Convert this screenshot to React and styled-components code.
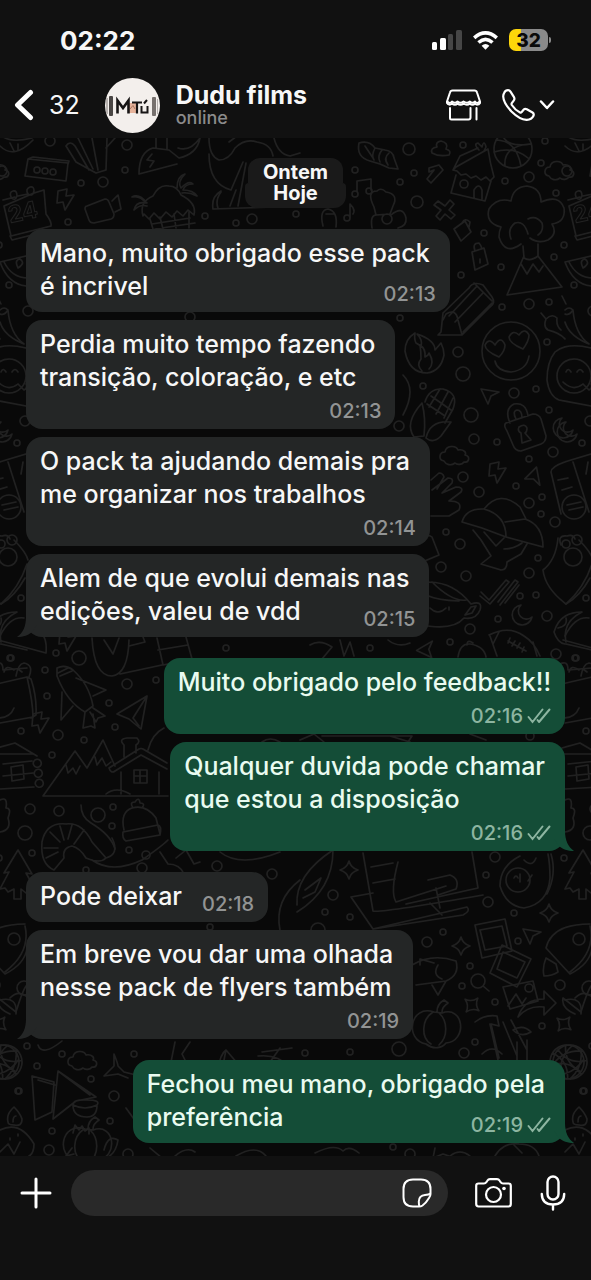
import React from 'react';
import styled, { createGlobalStyle } from 'styled-components';

const GlobalStyle = createGlobalStyle`
  * {
    box-sizing: border-box;
  }
  body {
    margin: 0;
    background: #111111;
    color: #f7f7f7;
    font-family: Inter, 'Liberation Sans', sans-serif;
  }
  button {
    display: flex;
    align-items: center;
    padding: 0;
    border: 0;
    background: none;
    color: inherit;
    font: inherit;
    cursor: pointer;
  }
  svg {
    display: block;
  }
`;

const Page = styled.div`
  display: flex;
  flex-direction: column;
  min-height: 100vh;
`;

const StatusBar = styled.div`
  display: flex;
  align-items: center;
  justify-content: space-between;
  height: 72px;
  padding: 8px 40px 0 60px;
`;

const Clock = styled.span`
  font-size: 26px;
  font-weight: 700;
`;

const StatusIcons = styled.div`
  display: flex;
  align-items: center;
  gap: 11px;
`;

const Battery = styled.div`
  position: relative;
  display: flex;
  align-items: center;
  justify-content: center;
  width: 39px;
  height: 22px;
  margin-right: 3px;
  border-radius: 7px;
  background: linear-gradient(90deg, #fdd60a ${(p) => p.$level}%, #8a8a8a ${(p) => p.$level}%);
  color: #0a0a0a;
  font-size: 19px;
  font-weight: 800;

  &::after {
    content: '';
    position: absolute;
    right: -3px;
    width: 2px;
    height: 6px;
    border-radius: 0 2px 2px 0;
    background: #8a8a8a;
  }
`;

const NavBar = styled.header`
  display: flex;
  align-items: center;
  height: 66px;
  padding: 0 36px 0 14px;
`;

const BackButton = styled.button`
  gap: 15px;
  margin-right: 25px;
  font-size: 25px;
`;

const Avatar = styled.div`
  width: 55px;
  height: 55px;
  margin-right: 16px;
  border-radius: 50%;
  overflow: hidden;
`;

const Contact = styled.div`
  flex: 1;
  min-width: 0;
`;

const ContactName = styled.h1`
  margin: 0;
  font-size: 25px;
  font-weight: 700;
  line-height: 26px;
`;

const ContactStatus = styled.p`
  margin: 0;
  color: #8b8b8b;
  font-size: 18px;
  font-weight: 500;
  line-height: 20px;
`;

const NavActions = styled.div`
  display: flex;
  align-items: center;
  gap: 21px;
`;

const CallButton = styled.button`
  gap: 4px;
`;

const Chat = styled.main`
  position: relative;
  flex: 1;
  padding: 20px 26px 12px;
  background: #090909;
`;

const Wallpaper = styled.svg`
  position: absolute;
  inset: 0;
  width: 100%;
  height: 100%;
`;

const Thread = styled.div`
  position: relative;
  display: flex;
  flex-direction: column;
`;

const Dates = styled.div`
  display: flex;
  flex-direction: column;
  align-items: center;
  margin-bottom: 21px;
`;

const DatePill = styled.span`
  padding: ${(p) => (p.$last ? '0 28px 4px' : '4px 15px 0')};
  border-radius: ${(p) => (p.$last ? '4px 4px 12px 12px' : '12px 12px 0 0')};
  background: #1a1a1a;
  font-size: 20px;
  font-weight: 700;
  line-height: 21px;
`;

const Group = styled.section`
  display: flex;
  flex-direction: column;
  align-items: ${(p) => (p.$mine ? 'flex-end' : 'flex-start')};
  gap: 8px;
  margin-bottom: 21px;

  &:last-child {
    margin-bottom: 0;
  }
`;

const Bubble = styled.article`
  position: relative;
  padding: 8px 14px 9px;
  border-radius: 16px;
  background: ${(p) => (p.$mine ? '#144d37' : '#242626')};
  color: ${(p) => (p.$mine ? '#e9fbf0' : '#f7f7f7')};
`;

const Line = styled.div`
  display: flex;
  align-items: flex-end;
  justify-content: space-between;
  gap: 20px;
  padding-right: ${(p) => (p.$tight ? 0 : 6)}px;
`;

const LineText = styled.span`
  font-size: 25px;
  font-weight: 500;
  line-height: 33px;
`;

const Meta = styled.div`
  display: flex;
  align-items: flex-end;
  justify-content: flex-end;
  gap: 4px;
  height: 26px;
  color: ${(p) => (p.$mine ? '#8db5a1' : '#929494')};
  font-size: 20px;
  font-weight: 500;
  line-height: 18px;
`;

const TailShape = styled.svg`
  position: absolute;
  bottom: 0;
  ${(p) => (p.$mine ? 'right: -9px;' : 'left: -9px; transform: scaleX(-1);')}
`;

const Composer = styled.footer`
  display: flex;
  align-items: center;
  padding: 14px 25px 64px 20px;
`;

const InputPill = styled.div`
  display: flex;
  flex: 1;
  align-items: center;
  min-width: 0;
  height: 46px;
  margin: 0 27px 0 19px;
  padding: 0 16px 0 20px;
  border-radius: 23px;
  background: #292929;
`;

const MessageInput = styled.input`
  flex: 1;
  min-width: 0;
  border: 0;
  outline: 0;
  background: transparent;
  color: #f7f7f7;
  font: inherit;
  font-size: 25px;
`;

const ComposerActions = styled.div`
  display: flex;
  align-items: center;
  gap: 28px;
`;

const groups = [
  {
    mine: false,
    messages: [
      { lines: ['Mano, muito obrigado esse pack', 'é incrivel'], time: '02:13', inline: true },
      { lines: ['Perdia muito tempo fazendo', 'transição, coloração, e etc'], time: '02:13' },
      { lines: ['O pack ta ajudando demais pra', 'me organizar nos trabalhos'], time: '02:14' },
      { lines: ['Alem de que evolui demais nas', 'edições, valeu de vdd'], time: '02:15', inline: true },
    ],
  },
  {
    mine: true,
    messages: [
      { lines: ['Muito obrigado pelo feedback!!'], time: '02:16', tight: true },
      { lines: ['Qualquer duvida pode chamar', 'que estou a disposição'], time: '02:16' },
    ],
  },
  {
    mine: false,
    messages: [
      { lines: ['Pode deixar'], time: '02:18', inline: true },
      { lines: ['Em breve vou dar uma olhada', 'nesse pack de flyers também'], time: '02:19' },
    ],
  },
  {
    mine: true,
    messages: [
      { lines: ['Fechou meu mano, obrigado pela', 'preferência'], time: '02:19', inline: true },
    ],
  },
];

// [cx, cy, r]
const dots = [
  [50, 141, 5], [2, 171, 5], [127, 145, 5], [125, 170, 3], [81, 183, 3], [103, 182, 5],
  [205, 216, 3], [68, 222, 3], [9, 285, 3], [28, 311, 5], [236, 223, 3], [252, 219, 5],
  [25, 421, 5], [17, 443, 3], [296, 214, 3], [355, 170, 3], [409, 149, 6], [414, 173, 3],
  [400, 182, 3], [463, 145, 3], [505, 181, 3], [529, 177, 5], [541, 163, 3], [556, 193, 3],
  [545, 141, 3], [417, 202, 6], [484, 233, 3], [564, 245, 3], [554, 257, 3], [501, 267, 3],
  [461, 275, 3], [502, 307, 3], [529, 304, 5], [549, 302, 3], [547, 342, 3], [458, 352, 5],
  [463, 374, 7], [514, 393, 5], [536, 389, 3], [423, 386, 3], [471, 415, 7], [549, 410, 3],
  [474, 439, 5], [497, 442, 3], [399, 426, 5], [553, 452, 5], [529, 459, 3], [463, 477, 5],
  [479, 492, 5], [516, 486, 3], [542, 497, 3], [529, 503, 5], [541, 514, 3], [555, 522, 5],
  [446, 532, 3], [460, 544, 5], [538, 558, 3], [441, 567, 5], [466, 576, 5], [529, 573, 5],
  [520, 596, 3], [536, 595, 3], [498, 619, 3], [547, 616, 5], [470, 629, 5], [450, 642, 3],
  [556, 654, 5], [576, 658, 3], [370, 648, 3], [400, 318, 3], [190, 317, 5], [21, 598, 3],
  [10, 658, 3], [56, 653, 3], [79, 658, 7], [45, 670, 3], [47, 696, 3], [127, 684, 5],
  [109, 703, 3], [156, 680, 3], [58, 735, 5], [21, 731, 3], [84, 740, 3], [115, 727, 3],
  [52, 755, 3], [30, 809, 5], [59, 811, 5], [98, 815, 7], [113, 807, 3], [112, 826, 3],
  [25, 833, 7], [32, 853, 3], [129, 850, 3], [146, 855, 4], [226, 648, 3], [86, 870, 3],
  [217, 866, 5], [272, 874, 5], [142, 868, 5], [495, 857, 5], [564, 858, 3], [486, 875, 3],
  [488, 902, 5], [333, 895, 5], [325, 912, 3], [350, 917, 3], [318, 930, 7], [514, 913, 3],
  [443, 932, 3], [427, 942, 5], [518, 941, 3], [470, 966, 3], [462, 986, 3], [560, 985, 5],
  [495, 1002, 3], [542, 1026, 3], [24, 988, 7], [27, 1046, 3], [62, 1054, 3], [37, 1066, 3],
  [91, 1079, 3], [134, 1054, 3], [114, 1096, 5], [18, 1091, 3], [110, 1121, 3], [52, 1131, 3],
  [49, 1150, 5], [128, 1154, 5], [305, 1053, 3], [350, 1052, 3], [399, 1049, 7], [475, 1042, 3],
  [464, 1053, 5], [584, 1091, 3], [210, 927, 3], [393, 1147, 3], [410, 1154, 5], [530, 736, 4],
];

// small shapes that come back all over the wallpaper, drawn round 0,0
const cloud = 'M-12 5c-6-1-5-9 1-9c1-7 11-7 13-2c6-1 9 3 7 5c6 1 4 8-1 7c-2 3-7 3-9 1c-4 3-9 2-11-2z';
const bolt = 'M-8-9l9-2l-1 7l8-1l-9 15l-2-8l-6 1z';
const cursor = 'M-9-7l18 3l-8 4l-3 8z';
const sparkle = 'M0-9q2 7 9 9q-7 2-9 9q-2-7-9-9q7-2 9-9z';
const moon = 'M-1-10a10 10 0 1 0 11 12a8 8 0 0 1-11-12z';
const tree = 'M0-22l14 24l-6-1l10 18l-7-2l-3 4l-5-4v10h-7v-10l-6 3l-3-4l-5 1l9-17l-5 1z';
const planet = 'M-17 0a17 17 0 1 0 34 0a17 17 0 1 0-34 0M-15-7q15 10 30 0M-15 8q15-10 30 0M-3-17q-10 17 0 34M6-16q8 16 0 32';
const pumpkin = 'M-3-15c-24-8-30 28-8 32c8 6 16 4 20-1c22-2 18-38-4-30zM-4-15c-12 8-12 26-2 32M2-14c9 8 9 24 0 32M0-15q0-8 7-12l4 3q-6 4-6 9';

const stamps = [
  [cloud, 561, 171], [cloud, 456, 456], [cloud, 84, 1061],
  [bolt, 66, 200], [bolt, 498, 473], [bolt, 41, 723], [bolt, 68, 641],
  [cursor, 490, 396], [cursor, 533, 478, 70], [cursor, 428, 650, -40], [cursor, 532, 936],
  [sparkle, 349, 870], [sparkle, 549, 913], [sparkle, 461, 946], [sparkle, 472, 1005, 40], [sparkle, 564, 1024, 40],
  [moon, 563, 428], [moon, 522, 615], [moon, 2, 432],
  [tree, 18, 872], [planet, 5, 1062, 20], [planet, 567, 1062, 60],
  [pumpkin, 437, 1027], [pumpkin, 88, 1144],
];

const drawings = [
  // fruit bowl, tape, fries
  'M0 146q14 14 33-6M0 134q8 10 32 4M10 143l4 8M18 144v6',
  'M28 159l40 4l-2 18l-41-5zM28 159l5-2l36 4l-1 3M34 170a3 3 0 1 0 6 0a3 3 0 1 0-6 0M42 171a3 3 0 1 0 6 0a3 3 0 1 0-6 0M50 172a3 3 0 1 0 6 0a3 3 0 1 0-6 0',
  'M66 146q4-6 9 0l14 24M66 146l10 16l20 11l10-3l1-32M78 138l15 31M92 138l6 32M115 138l-9 10',
  // bird and fish
  'M139 174q0-22 14-26l16 2l10 8q18-4 21-20M139 174l38-10M152 154l-5 6l7 1l-4 6M156 148v-10M167 149v-11M178 148q12 4 22-10',
  // calendar
  'M3 200l12-3M18 196l10-2M34 193l10-3l2 24q6 8 5 12l-40 10l-7-30zM13 191q-4 1-2 6q4 5 6-1q0-6-4-5M30 187q-5 2-2 7q5 3 6-3q0-5-4-4M10 236l2 4l36-9',
  // camera
  'M87 206l18-7q3 0 4 3l5 12q0 4-3 5l-17 4q-4 0-5-3l-4-11q0-3 2-3zM112 201l6-6l3 14l-6 3',
  // beach hut and palms
  'M143 216q-4-14 10-20q6-12 16-10q8 0 12 9q16 8 13 20l-6-5l-5 6l-6-5l-5 6l-6-5l-6 7l-6-6l-5 6l-5-5zM150 219l3 10M160 217l3 12M174 214l2 14M189 212v16M152 224l38-6M155 229l40-6M147 203q-8-10-15-6q8-2 14 6q-10-2-12 7q6-6 13-4M177 188q0-12 8-14q-8 8-4 14q8-8 12-4q-8 0-10 6q10 0 14 6q-8-4-15-3',
  // dinosaur
  'M209 138q0 18 10 22q10 0 16-12q10-10 22-6q14 2 16 14M209 154q0 30 22 36l12-28M236 190l-6 16M246 163l-8 43M221 191q-10 6-8 18l60-2M221 192q-6 8-3 16M229 142l8-6M274 138q4 16 16 18l10-3',
  // melon slice
  'M0 262l26-6M0 262q8 22 26 24M4 262q8 16 24 16M18 268q-4-8 2-9q6 4-2 9',
  // chilis
  'M0 310q4-4 8 0q-4 6-8 4M8 310q2 24 16 34q-20-8-24-22M541 313l5 6q-3 8 2 11q12 3 17 9M546 319q6-6 11-1q-1 8 4 12M562 296l4 8',
  // shell
  'M359 143q10-3 16 5l10 2q8 1 9 8l4 11l-9-1l-9-4l-10-3q-14-4-11-18M375 148q-4 8-1 12M382 150q-5 6-2 12M389 153q-6 5-1 12M365 146l8 12',
  // ice cream
  'M432 153q-2-5 5-6q-2-5 4-6q8 2 5 8q6 2 3 6q-10 2-17-2',
  // tree house
  'M453 170l3-3l32-18q2 14 6 28l-4 4l-4-4l-5 3l-5-4l-5 2l-5-4l-5 1l-4-4zM456 175l-5 18l34 8l6-20M460 184a4 4 0 1 0 8 0a4 4 0 1 0-8 0M474 198v-8q5-8 8 0v9M479 150q-6-6-1-7l4 4q2-8 4 0l-2 4M453 170l7-14l18-8',
  // basketball
  'M494 149a19 19 0 1 0 38 0a19 19 0 1 0-38 0M496 140q20 0 25 26M505 166q-2-20 25-22M502 134q4 14 29 10M494 152q20-6 34 6',
  // notes
  'M357 192v-11l14-2v11M352 194a3 3 0 1 0 6 0a3 3 0 1 0-6 0M366 191a3 3 0 1 0 6 0a3 3 0 1 0-6 0M350 218v-14q6 6 3 10M344 218a3 3 0 1 0 6 0a3 3 0 1 0-6 0',
  // flower
  'M374 207q-8-16 3-16q4-4 9 1q13 2 7 14M374 207l2 8l14-1l3-8M382 219a5 5 0 1 0 10 0a5 5 0 1 0-10 0M376 215q-6 0-4 13M391 215q12-10 15 3q1 8-8 10M323 226q-4-16 5-17q10 2 8 18M326 214h8',
  // seven and cross
  'M429 168l10-3l4 5l-12 13l-4-4l7-9l-5 2zM438 201l7 5l5-6l4 4l-5 6l6 5l-4 4l-6-5l-5 6l-4-4l5-6l-7-5z',
  // small locks
  'M454 229l11-8l6 11l-10 9zM462 223q3-6 8-1l-1 5M472 252l12-4l4 16l-13 6zM475 251q-3-8 4-8q2 2 3 6M480 259v4',
  // volcano
  'M521 244q-16 12-22-7q0-6 2-10q-16-4-12-18q8-12 22-8q2-14 16-15q14 2 14 16q18-8 23 6q2 14-12 16q6 10-4 16q-10 4-18-2M528 234q-4-14-13-11q-8 6-4 16M528 219q8-4 14 4q2 8-4 12M523 246l1 12q6 4 14-2v-12M524 256l-17 39l55-8l-24-31M521 264l6 10l6-10l6 8l4-6',
  // pencil
  'M441 332l-3 3l24 0l28-28q6-4 2-10l-9-12q-10-4-14 3l-26 25zM443 320l3-6q10-6 12 6l4 15M449 316l28-30M455 322l28-29M474 283l18 18M463 332l29-29',
  // fire
  'M415 333q-10 6-10 18q4 22 22 22q14-2 17-18q0-6-3-12l-6 7q0-10-18-16q6 6 4 12l-5-3q-2-4-1-10M422 371q-6-6-1-12q0-8-1-14q6 4 5 12q4-2 4-4q6 10 0 16',
  // heart eyes
  'M482 351a29 29 0 1 0 58 0a29 29 0 1 0-58 0M499 357q-14-6-14-12q4-8 10 0q6-10 10 0q0 6-6 12M523 349q-14-6-14-12q4-8 10-2q6-8 10 0q0 6-6 14M495 361q2 10 16 11q16-2 18-16',
  // corn
  'M425 402q4-14 18-13q16 4 10 20l-8 14M431 396l20 14M427 404l18 12M440 389l-11 18M448 392l-12 22M453 398l-9 20M422 403q-18 20-8 34l10-1q2-18-2-33M426 438q4-18 25-16l-10 14q-8 8-15 2M403 375q14 14 0 40',
  // padlock
  'M507 431q-4-6-1-8l27-9q6 0 8 5l5 17q0 6-5 8l-20 7q-6 0-8-6zM510 423q-6-14 4-19q12-2 14 12M516 419q-4-8 1-9q5 0 5 8M519 427q6-4 8 1q0 4-2 5l6 7l-9 3l-1-10q-4-2-2-6',
  // tongue smiley
  'M-8 376a17 17 0 1 0 34 0a17 17 0 1 0-34 0M1 372q2-5 5 0M12 372q3-5 6 0M-2 382q10 10 20 2M18 384l6 6q4-2 2-6M26 348q-24-6-36 4q-8 10-8 28q2 16 12 20l32 6',
  // hand
  'M431 480l8-7q4 0 5 4l-7 12M432 490l16-12q6 0 4 5l-10 10l14-6q8 0 5 5l-12 9q14 0 10 9l-10 6h-18',
  // mushroom
  'M462 522q4-14 22-13q22 6 22 28l-24-9zM506 537l37 10q0-22-18-28l-20 3M484 509q16-20 36-2l6 12M473 530l8 10l10 16l-10 8l20 6q6 0 6-8l14-8l6-10M484 532l12 14l8-8M504 549q10 0 18-6',
  // keypad
  'M551 472q0-6 20-12l20-6M551 472l10 42M558 480l10-2M562 490l10-3M573 462l16 50M588 462l-2 12M562 507a12 12 0 1 0 24 0a12 12 0 1 0-24 0M567 505l14-3M569 510l14-3',
  // paw
  'M558 538q-2 22-15 32q2 18 23 34q14-8 24-26M561 545q-4-10 6-9q6-2 8 3M562 544a4 4 0 1 0 8 0a4 4 0 1 0-8 0M572 540a5 5 0 1 0 10 0a5 5 0 1 0-10 0M564 557a9 9 0 1 0 18 0a9 9 0 1 0-18 0M14 540q12 12 14 20M1 604q18-16 26-40',
  // lips, teacup
  'M415 539q12-6 17-2l7 18l-24 10M415 584q34-8 56 20q12-4 9 6q-4 10-16 8q-12 14-46 6M432 582q20 20 34 18M425 585q-10 14 34 16M430 608q8 8 16 0M449 607v3M471 607l-6 8l7-2l4-7z',
  // ticks
  'M481 592l8 8l17-20l3 2l-19 22l-10-8M498 602l17-22l3 2l-18 23M505 603l14-18',
  // football, taco
  'M490 636l7 20M489 635q20-10 35 1q10 6 16 20M508 641l18 10M510 638l-2 5M515 641l-3 5M520 643l-3 5M524 647l-2 5M499 632l-6 12M533 642l4 14M554 632q6-20 28-20q-20 10-16 30M554 632q4 12 12 12l26 6M558 628q10-2 8-10',
  'M458 657q2-14 12-13q14 2 16 13M467 645q0-6 6-2M560 664q8-4 8 6l24-2M-2 640l48 13M46 653q2-20-12-24M0 636q10-20 24-18',
  'M310 645q10-6 22 2l-10 12M340 640l4 16l6-14l4 14M388 640q10 8 22 3',
  // carrot, gift
  'M92 638q2 38 20 38q16-2 17-36M104 640l9 14l6-16M129 646l16-4l-2-5M157 638l6 27l29-6l-6-22M158 650l30-5M120 674l42-9',
  // rocket
  'M57 668q8-4 16 2q16 14 20 36l-8 6q-18-10-28-36zM60 676l12-5M58 673l10-5M76 678l30 12l-13 6M62 692l-1 28l12-14M85 712l-2 16l8-2l4 2l-2-14M93 708l12 8l-7 2l-2 4l-6-10',
  // paper plane
  'M147 696l-30 18l12 5l12 10zM147 696l-14 22l6 8',
  // backpack
  'M-3 684l30-7q6 26 6 40l-33 6M27 677l4 2q6 18 5 36l-5 3M16 676q2-12 8-13q10 2 5 14M18 669l4 3M4 672q2-8 10-2M-2 718q12 0 16-10',
  // log cabin
  'M-3 748l18-5l22 13M-3 754h36M3 764l29-3M3 776l30-3M0 789l34-2M34 761a4 4 0 1 0 1-1M35 771a4 4 0 1 0 1-1M36 781a4 4 0 1 0 1-1M11 767l12-2l1 14l-12 2z',
  // mountains and house
  'M43 796l32-45l12 17l16-28l12 26M66 765l2 8l5-5l3 6l4-8M95 757l2 8l5-7l4 8l5-4M43 796h125M109 768l30-19q2-1 4 0l24 14M109 768q2 6 6 3l26-16l26 14M121 772v22M159 772v22M124 757v-12q-6-6 3-7h10q4 4-1 7v8M134 770h13v13h-13zM140 770v13M134 776h13M106 794q10-8 24 0M148 750q4-16 16-22',
  // wool hat
  'M124 830q-4-18 8-22q14-4 24 10l4 16M123 832l35-7q4 1 2 10l-34 6q-4-2-3-9zM133 808q-4-6 2-6q4-6 5 1q6 0 2 5M81 805q0 12 10 18q20 12 24 26',
  // shrimp
  'M42 842q4-20 24-18q16-2 26 18l14 16q-6 6-20 0q-6-10-14-12q-10 2-8 12l-10 12q-14-6-12-28M50 832l10 10M60 826l4 14M72 825l-4 14M84 830l-10 14M44 848l14 0M46 858l12-6M106 858q14-4 6-20M92 860q20 14 50 0q20-14 26-20',
  'M160 852l8 12q12 0 16 10M176 858l10-8l8 14l6-2M220 852q20 16 60 0',
  'M0 800q8-4 6 8q6 0 2 10q4 12-8 14',
  // leaf
  'M297 905q-2-30 36-55q0 40-36 62M305 890l16-12l-6 14l-12 6M280 930q-6-30 20-50',
  // laptop
  'M363 853l10 58q8 2 110-16M398 862q-8 30-2 40l50-16M351 897l22-4M351 897l22 32l90-14q8-4 4-8l-94 22M371 867l22-4M373 883l22-4M472 852l6 36l-72 16M428 880l22-5q10 4 6 14l-18 6M436 888l4 20M430 903l12 12',
  // avocado
  'M520 856q-20 10-20 30q6 20 24 22q24-4 26-30q0-14-2-24M506 880a12 12 0 1 0 24 0a12 12 0 1 0-24 0M524 860q8 8 12-2M514 878q2-4 4 0M520 874v8M532 875l-4 6M551 854q6 20-4 40',
  // photos
  'M475 925l30-6l7 32l-30 7zM480 930l22-4l5 20l-22 4zM502 945l29 14l-14 28l-27-14zM503 952l22 10l-8 16l-20-9z',
  // second rocket
  'M546 948q6-24 44-24M546 948l24 26q20-10 22-26M573 939a6 6 0 1 0 12 0a6 6 0 1 0-12 0M546 958q-4 10-2 18q8 0 14-4l-2-8zM25 926q6 26-20 46M0 1000q18-4 16 14M10 998q8-8 16-2',
  // fish
  'M412 965q20-12 44-4q4 14-10 20l-30 4M446 981l-8 14l-6-10M420 965v-6l14 4M438 965q-6 10 4 14',
  // magnifier, mail, arrow
  'M471 981a7 7 0 1 0 14 0a7 7 0 1 0-14 0M483 986l6 5M503 987l30-6l5 20l-28 8zM508 1006l8-12l6 10l4-6M525 988a4 4 0 1 0 8 0a4 4 0 1 0-8 0M518 1017q6-18 26-18v-8l12 12l-12 12v-8q-16-2-26 10M563 998l18 14q6-20 10-26M563 998q-2 10 12 16',
  // axe, bamboo
  'M475 1022q10-8 22-6l2 10l-8-2l8 34M490 1024l8 36M503 1022l14 34M511 1020l16 30M482 1054q10-10 20 0M513 1030q10-6 18 2q-10 6-18-2M527 1040v20M517 1042v18',
  // whale tail
  'M104 1076l10-10v-12q4 10 4 12l6 6l16 4M104 1076l14-2l10 4M38 1045q4 12 24-4M175 1042l-6 30M190 1042l-8 12l6 12M218 1070q2-16 8-20l12 14M226 1050l-4 20M262 1052l30-4M258 1056q20-2 30 10M280 1048l-10 14',
  // origami and sushi
  'M32 1076l3 44l17-8l2-30zM53 1119l5-48l38 26l-20 4l-23 18zM38 1080l17 5M58 1071l32 24M73 1105q0-6 14-5q14 0 10 5q0 12-10 12q-14 0-14-12q12 6 24 0',
  // cake and fire
  'M0 1130q20-10 34 14q0 14-12 14M8 1122q-2-8 6-15q6 6 8 12q0 8-8 6q-6 0-6-3M13 1122q0-6 3-6M0 1152l8-8l6 10l6-12M10 1138v2M18 1134v2M73 1133l2-8l4 5l3-4l3 5l4-3v6M104 1150q4-16 14-10q-2 14-12 18M126 1108l10 14M74 1154l-8 2l6-8',
  'M315 1153q20-10 28-2q6-6 16 2M435 1148l-2 10l10-4l6 2M495 1156q8-14 24-12q16 0 20 12M514 1145l8 8M150 1148l12 10M175 1156q12-10 20-4M236 1156q20-12 30 0M450 1156q10-8 20 0',
  'M262 742q8-6 18 0M300 740l14-6l10 8M322 736h90l-4 6M470 734l16 6M390 736l20 6',
];

const Doodles = () => (
  <Wallpaper aria-hidden="true">
    <defs>
      <pattern id="doodles" width="565" height="1018" patternUnits="userSpaceOnUse" viewBox="0 138 565 1018">
        <g id="tile" fill="none" stroke="#212121" strokeWidth="1.600" strokeLinejoin="round" strokeLinecap="round">
          {dots.map(([cx, cy, r]) => (
            <circle key={`${cx}-${cy}`} cx={cx} cy={cy} r={r} />
          ))}
          {stamps.map(([d, x, y, turn = 0]) => (
            <path key={`${x}-${y}`} d={d} transform={`translate(${x} ${y}) rotate(${turn})`} />
          ))}
          {drawings.map((d) => (
            <path key={d} d={d} />
          ))}
          <text x="10" y="223" fontSize="23" fontWeight="700" strokeWidth="1" transform="rotate(-12 10 223)">
            24
          </text>
        </g>
        <use href="#tile" x="-565" />
        <use href="#tile" x="565" />
      </pattern>
    </defs>
    <rect width="100%" height="100%" fill="url(#doodles)" />
  </Wallpaper>
);

const Tail = ({ mine }) => (
  <TailShape $mine={mine} width="20" height="20" viewBox="0 0 20 20" aria-hidden="true">
    <path d="M11 0C11 9 14 16 20 20C14 20 8 18 5 15L0 8V0z" fill={mine ? '#144d37' : '#242626'} />
  </TailShape>
);

const Ticks = () => (
  <svg width="24" height="18" viewBox="0 0 24 18" fill="none" stroke="currentColor" strokeWidth="2" strokeLinecap="round">
    <path d="M1.500 10L5.500 15L15.500 2.500M12 15L22.500 2.500M10.500 13L12 15" />
  </svg>
);

const Message = ({ message, mine, tail }) => {
  const { lines, inline, tight } = message;
  const meta = (
    <Meta $mine={mine}>
      <time>{message.time}</time>
      {mine && <Ticks />}
    </Meta>
  );

  return (
    <Bubble $mine={mine}>
      {tail && <Tail mine={mine} />}
      {lines.map((line, i) => {
        const withMeta = inline && i === lines.length - 1;
        return (
          <Line key={line} $tight={tight || withMeta}>
            <LineText>{line}</LineText>
            {withMeta && meta}
          </Line>
        );
      })}
      {!inline && meta}
    </Bubble>
  );
};

const App = () => {
  return (
    <Page>
      <GlobalStyle />
      <StatusBar>
        <Clock>02:22</Clock>
        <StatusIcons>
          <svg width="30" height="20" viewBox="0 0 30 20" fill="#ffffff">
            <rect x="0" y="12" width="5" height="8" rx="1.500" />
            <rect x="8" y="8" width="6" height="12" rx="1.500" />
            <rect x="16" y="4" width="5" height="16" rx="1.500" fill="#464646" />
            <rect x="24" y="0" width="6" height="20" rx="1.500" fill="#464646" />
          </svg>
          <svg width="25" height="19" viewBox="0 0 25 19" fill="none" stroke="#ffffff" strokeWidth="3.600">
            <path d="M1.200 6.800Q12.500-3 23.800 6.800M5.500 11.500Q12.500 5.200 19.500 11.500" />
            <path d="M12.500 18.800L8.600 14.800Q12.500 11.400 16.400 14.800z" fill="#ffffff" stroke="none" />
          </svg>
          <Battery $level={32}>32</Battery>
        </StatusIcons>
      </StatusBar>

      <NavBar>
        <BackButton aria-label="Back, 32 unread">
          <svg width="20" height="32" viewBox="0 0 20 32" fill="none" stroke="#ffffff" strokeWidth="5" strokeLinecap="round" strokeLinejoin="round">
            <path d="M16.500 3.500L3.500 16L16.500 28.500" />
          </svg>
          32
        </BackButton>
        <Avatar>
          <svg width="55" height="55" viewBox="0 0 55 55">
            <rect width="55" height="55" fill="#f3efec" />
            <rect x="4" y="18" width="4" height="20" rx="1" fill="#4a4644" />
            <rect x="1" y="20" width="2" height="16" fill="#b7b2af" />
            <rect x="47" y="19" width="4" height="19" rx="1" fill="#77716e" />
            <rect x="52" y="21" width="1" height="15" fill="#b7b2af" />
            <path d="M24 25h9v10h-9z" fill="#e6b39b" />
            <g fill="none" stroke="#171515" strokeWidth="2.600">
              <path d="M12.500 35.500V22.500L18 30L23.500 22.500V35.500" />
              <path d="M27 24.500H37M32 24.500V35.500" strokeWidth="2.200" />
              <path d="M36.500 28V34.500H42.500V28M39 25.500L42 22" strokeWidth="2" />
              <path d="M25 31L28 27.500L30 31" strokeWidth="1" stroke="#a87660" />
            </g>
          </svg>
        </Avatar>
        <Contact>
          <ContactName>Dudu films</ContactName>
          <ContactStatus>online</ContactStatus>
        </Contact>
        <NavActions>
          <button aria-label="Shop">
            <svg width="35" height="32" viewBox="0 0 35 32" fill="none" stroke="#ffffff" strokeWidth="2" strokeLinejoin="round" strokeLinecap="round">
              <path d="M6.500 1.500H28.500Q30.500 1.500 31 3.500L34 12.500V14Q31.500 17 29 14.500Q26.500 17 23.800 14.500Q21 17 17.500 14.500Q14.500 17 11.500 14.500Q9 17 6 14.500Q3 17 1 14V12.500L4 3.500Q4.500 1.500 6.500 1.500z" />
              <path d="M2 13Q4 15 6 12.500Q9 15 11.500 12.500Q14.500 15 17.500 12.500Q21 15 23.800 12.500Q26.500 15 29 12.500Q31 15 33 13" />
              <path d="M4 19V29Q4 30.500 5.500 30.500H22.500Q24.500 30.500 24.500 28.500V19M30.500 19V30.500" />
            </svg>
          </button>
          <CallButton aria-label="Call">
            <svg width="33" height="32" viewBox="0 0 33 32" fill="none" stroke="#ffffff" strokeWidth="2.200" strokeLinejoin="round">
              <path d="M2.200 3.800Q3.500 1.200 6 1.200Q7.600 1.200 8.500 2.600L12 8.200Q13 10 11.700 11.600L9.800 14.200Q9.300 15 9.800 16Q13 21 18 23.400Q19 23.800 19.700 23L21.800 20.500Q23 19.200 24.800 20.200L30.500 23.500Q32.300 24.800 31.500 26.800Q29.500 31 24.500 30.800Q17.500 30.500 9.500 22.500Q1.500 14 1.200 7.500Q1.200 5.300 2.200 3.800z" />
            </svg>
            <svg width="16" height="10" viewBox="0 0 16 10" fill="none" stroke="#ffffff" strokeWidth="2.500" strokeLinecap="round" strokeLinejoin="round">
              <path d="M2 1.500L8 8L14 1.500" />
            </svg>
          </CallButton>
        </NavActions>
      </NavBar>

      <Chat>
        <Doodles />
        <Thread>
          <Dates>
            <DatePill>Ontem</DatePill>
            <DatePill $last>Hoje</DatePill>
          </Dates>
          {groups.map((group, i) => (
            <Group key={i} $mine={group.mine}>
              {group.messages.map((message, j) => (
                <Message
                  key={message.lines[0]}
                  message={message}
                  mine={group.mine}
                  tail={j === group.messages.length - 1}
                />
              ))}
            </Group>
          ))}
        </Thread>
      </Chat>

      <Composer>
        <button aria-label="Attach">
          <svg width="32" height="32" viewBox="0 0 32 32" stroke="#ffffff" strokeWidth="3" strokeLinecap="round">
            <path d="M16 2V30M2 16H30" />
          </svg>
        </button>
        <InputPill>
          <MessageInput type="text" aria-label="Message" />
          <button aria-label="Stickers">
            <svg width="30" height="30" viewBox="0 0 30 30" fill="none" stroke="#ffffff" strokeWidth="2" strokeLinejoin="round">
              <path d="M17 28.500H11Q1.500 28.500 1.500 19V11Q1.500 1.500 11 1.500H19Q28.500 1.500 28.500 11V16Q28.500 18 27 20Q24 25 20.500 27.500Q19 28.500 17 28.500z" />
              <path d="M17.500 28.500Q16.800 27 16.800 23.500Q17 17.500 23 17Q27 16.800 28.500 15.500" />
            </svg>
          </button>
        </InputPill>
        <ComposerActions>
          <button aria-label="Camera">
            <svg width="37" height="30" viewBox="0 0 37 30" fill="none" stroke="#ffffff" strokeWidth="2.200" strokeLinejoin="round">
              <path d="M3.500 5.500H9Q10.500 5.500 11.500 4L12.500 2.500Q13.300 1.200 15 1.200H22Q23.700 1.200 24.500 2.500L25.500 4Q26.500 5.500 28 5.500H33.500Q35.800 5.500 35.800 7.800V26Q35.800 28.500 33.500 28.500H3.500Q1.200 28.500 1.200 26V7.800Q1.200 5.500 3.500 5.500z" />
              <circle cx="18.500" cy="16.500" r="7.500" />
              <circle cx="29" cy="10.500" r="1.800" fill="#ffffff" stroke="none" />
            </svg>
          </button>
          <button aria-label="Record voice message">
            <svg width="26" height="36" viewBox="0 0 26 36" fill="none" stroke="#ffffff" strokeWidth="2.400" strokeLinecap="round">
              <rect x="7.500" y="1.500" width="11" height="23" rx="5.500" />
              <path d="M1.800 19Q2 29.500 13 29.500Q24 29.500 24.200 19M13 29.500V34.500" />
            </svg>
          </button>
        </ComposerActions>
      </Composer>
    </Page>
  );
};

export default App;
